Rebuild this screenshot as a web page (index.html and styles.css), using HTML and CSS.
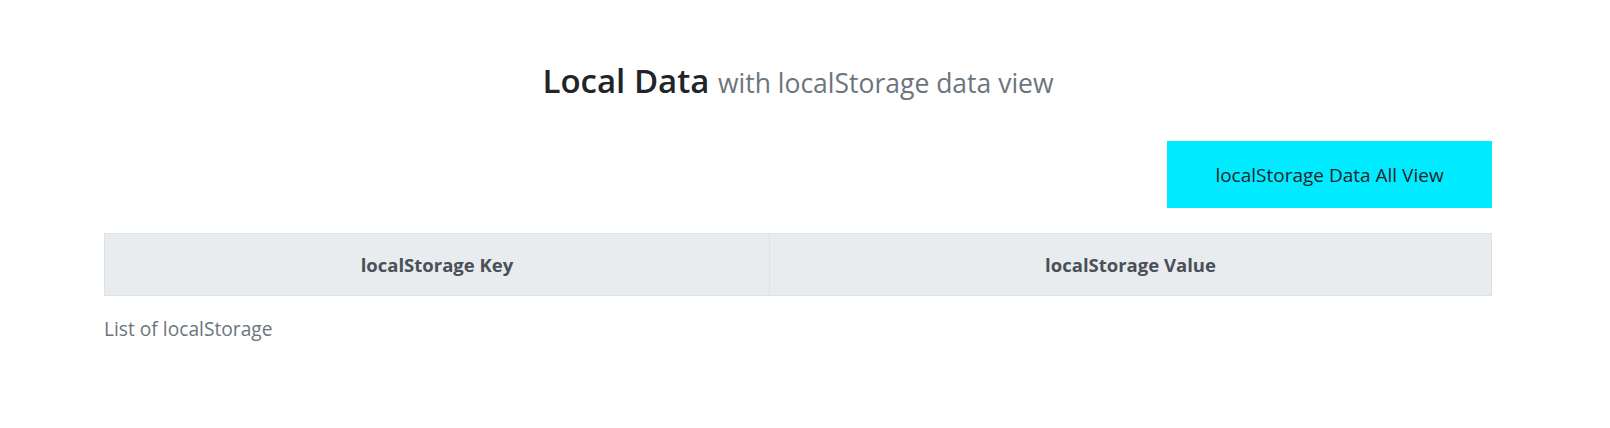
FILE: index.html
```html
<!DOCTYPE html>
<html lang="en">
<head>
<meta charset="utf-8">
<title>Local Data</title>
<link rel="stylesheet" href="styles.css">
</head>
<body>
<div class="container">
  <h1 class="title">Local Data <small class="muted">with localStorage data view</small></h1>
  <div class="actions">
    <button class="btn-view" type="button">localStorage Data All View</button>
  </div>
  <table class="data-table">
    <caption>List of localStorage</caption>
    <thead>
      <tr>
        <th class="col-key">localStorage Key</th>
        <th class="col-value">localStorage Value</th>
      </tr>
    </thead>
    <tbody></tbody>
  </table>
</div>
</body>
</html>
```

FILE: styles.css
```css
html, body {
  margin: 0;
  padding: 0;
  background: #fff;
}
body {
  font-family: "Open Sans", "Noto Sans", sans-serif;
  color: #212529;
  font-size: 19px;
}
.container {
  width: 1388px;
  margin-left: 104px;
  padding-top: 57px;
}
.title {
  margin: 0;
  text-align: center;
  font-size: 33px;
  font-weight: 600;
  line-height: 48px;
  color: #212529;
}
.title .muted {
  font-size: 26.5px;
  font-weight: 400;
  color: #6c757d;
}
.actions {
  display: flex;
  justify-content: flex-end;
  margin-top: 34px;
}
.btn-view {
  width: 325px;
  height: 67px;
  background: #00ebff;
  border: none;
  border-radius: 0;
  font-family: inherit;
  font-size: 19px;
  color: #212529;
  padding: 0;
}
.data-table {
  width: 100%;
  margin-top: 25px;
  border-collapse: collapse;
  caption-side: bottom;
}
.data-table caption {
  text-align: left;
  color: #6c757d;
  font-size: 19.2px;
  padding-top: 19px;
}
.data-table th {
  background: #e9ecef;
  border: 1px solid #dee2e6;
  color: #495057;
  font-weight: 700;
  font-size: 18.5px;
  height: 61px;
  padding: 0;
  text-align: center;
}
.col-key { width: 664px; }
```
